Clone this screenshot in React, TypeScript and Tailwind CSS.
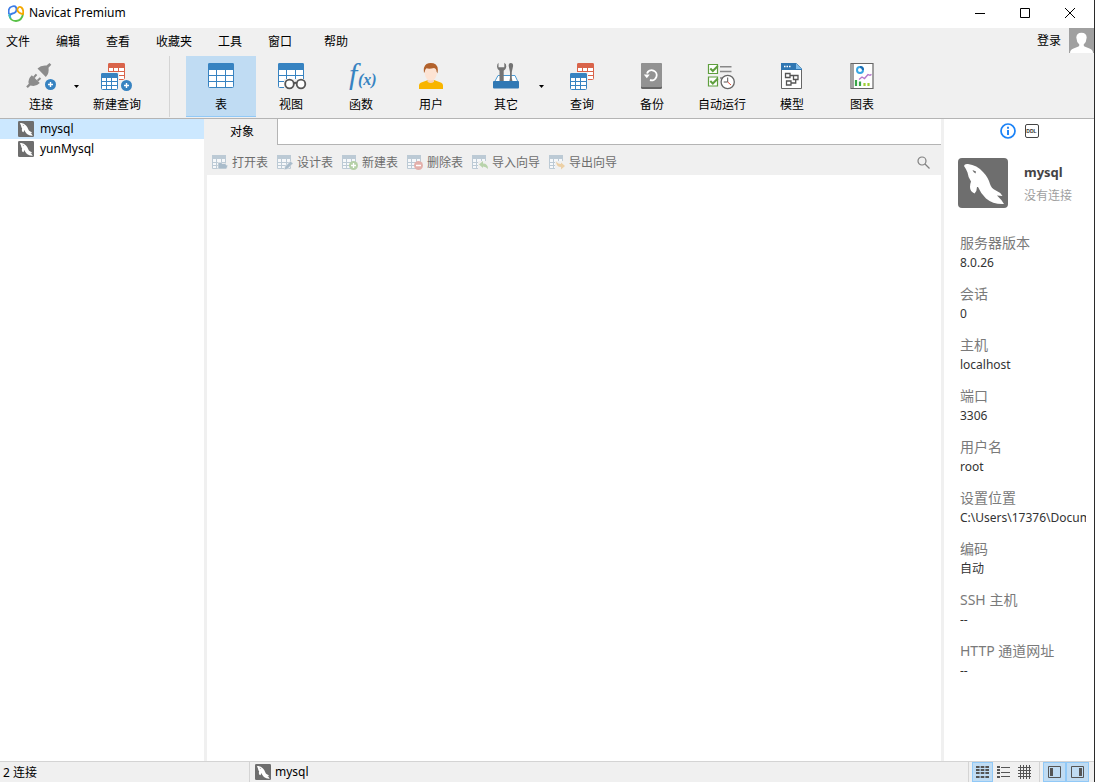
import type { ReactNode } from "react";
import clsx from "clsx";

const BLUE = "#3783c1";
const RED = "#d9634a";

function Grid({ x, y, w, h, head, color, cols, rows }: {
  x: number; y: number; w: number; h: number; head: number; color: string; cols: number[]; rows: number[];
}) {
  return (
    <g>
      <rect x={x + 0.5} y={y + 0.5} width={w - 1} height={h - 1} rx="1" fill="#fff" stroke={color} />
      <path d={`M${x} ${y + head}V${y + 1.5}q0-1.5 1.5-1.5h${w - 3}q1.5 0 1.5 1.5V${y + head}z`} fill={color} />
      {cols.map((c) => (
        <path key={c} d={`M${x + c + 0.5} ${y + head}V${y + h}`} stroke={color} />
      ))}
      {rows.map((r) => (
        <path key={r} d={`M${x} ${y + r + 0.5}H${x + w}`} stroke={color} />
      ))}
    </g>
  );
}

function Plus({ x, y }: { x: number; y: number }) {
  return (
    <g>
      <circle cx={x} cy={y} r="6.5" fill="#f0f0f0" />
      <circle cx={x} cy={y} r="5.5" fill={BLUE} />
      <path d={`M${x - 2.5} ${y}h5M${x} ${y - 2.5}v5`} stroke="#fff" strokeWidth="1.4" />
    </g>
  );
}

function Icon({ children }: { children: ReactNode }) {
  return (
    <svg viewBox="0 0 32 28" className="h-7 w-8 overflow-visible" fill="none" aria-hidden="true">
      {children}
    </svg>
  );
}

const queryTables = (
  <>
    <Grid x={7} y={1} w={17} h={17} head={5} color={RED} cols={[5, 10]} rows={[8, 12]} />
    <rect x="-1" y="10" width="19" height="19" fill="#f0f0f0" />
    <Grid x={0} y={11} w={17} h={17} head={5} color={BLUE} cols={[5, 10]} rows={[8, 12]} />
  </>
);

const connectIcon = (
  <Icon>
    <path d="M12.5 6.5Q16 3 21.5 3.6l3-2.6 1.8 1.8-2.8 3Q24.5 11.5 20.8 15z" fill="#8c8c8c" />
    <path d="M6.8 13.2 14.8 21Q11 25 5.5 23.5L2.800 26 1.200 24.400 3.800 21.800Q2.500 17 6.800 13.200z" fill="#8c8c8c" />
    <path d="m8.800 15.500 2.700-3.200M12.500 18.800l3-2.700" stroke="#8c8c8c" strokeWidth="2" />
    <Plus x={25.5} y={22.5} />
  </Icon>
);

const newQueryIcon = (
  <Icon>
    {queryTables}
    <Plus x={25.5} y={23.5} />
  </Icon>
);

const tableIcon = (
  <Icon>
    <Grid x={3} y={1} w={26} h={25} head={7} color={BLUE} cols={[8, 17]} rows={[12, 18]} />
  </Icon>
);

const viewIcon = (
  <Icon>
    <Grid x={3} y={1} w={26} h={25} head={7} color={BLUE} cols={[8, 17]} rows={[12, 18]} />
    <path d="M9 17h21v10H9z" fill="#f0f0f0" />
    <g stroke="#555" strokeWidth="1.8">
      <circle cx="14.5" cy="22" r="4.3" fill="#fff" />
      <circle cx="26" cy="22" r="4.3" fill="#fff" />
      <path d="M18.5 21.5q1.700-1.500 3.400 0" />
    </g>
  </Icon>
);

const functionIcon = (
  <Icon>
    <g fill={BLUE} className="font-['Liberation_Serif',serif] italic">
      <text x="4" y="22" fontSize="30">f</text>
      <text x="13" y="23" fontSize="16" fontWeight="bold">(x)</text>
    </g>
  </Icon>
);

const userIcon = (
  <Icon>
    <path d="M4 27v-3.500q0-2.500 3-3.300l6-2.200h6l6 2.200q3 .8 3 3.300V27z" fill="#f8b500" />
    <path d="M12.500 17.500h6.500v2.200q-3.200 2.600-6.500 0z" fill="#f9d3b6" />
    <ellipse cx="15.8" cy="11.5" rx="6" ry="7" fill="#fde3d3" />
    <path d="M9 11Q8 4.500 11.500 2q3-1.700 7-.7Q24 3 22.500 11.500l-1-2Q21.500 6.500 19 6q-5 1.200-7.500.2Q10 7.500 9.700 10z" fill="#b2622c" />
  </Icon>
);

const toolsIcon = (
  <Icon>
    <path d="M4.500 20 8 13.500h17L28 20z" fill="#fff" stroke="#4a9ad4" />
    <path d="M8.500.8v4.500h5.800V.8q2.200 1.200 2 4-.2 2.500-2.600 4V21h-4.200V8.800q-2.300-1.300-2.500-4 0-2.800 1.500-4z" fill="#737373" />
    <path d="M20.800 1q2.500 0 2.300 3l-1.300 6v6l.8 4h-3.400l.8-4v-6L18.700 4q-.2-3 2.100-3z" fill="#737373" />
    <rect x="3" y="19" width="26" height="7.5" rx="1" fill="#3078b4" />
  </Icon>
);

const queryIcon = (
  <Icon>
    <g transform="translate(4 0)">{queryTables}</g>
  </Icon>
);

const backupIcon = (
  <Icon>
    <rect x="5" y="1" width="21" height="26" rx="1.5" fill="#666" />
    <path d="M5 24V2.500Q5 1 6.500 1h18Q26 1 26 2.500V24q0 1-1 1H6q-1 0-1-1z" fill="#929292" />
    <path d="M11 11.500A5 5 0 1 1 14 18" stroke="#fff" strokeWidth="1.9" />
    <path d="M7.800 12.500h6l-3 3.800z" fill="#fff" />
  </Icon>
);

const autoIcon = (
  <Icon>
    <path d="M2.500 2.500h9v9h-9zM2.500 15h9v9h-9z" fill="#fff" stroke="#5f9f3e" strokeWidth="1.2" />
    <path d="m4.300 6.500 2.500 2.500 5-5M4.300 19l2.500 2.500 5-5" stroke="#5f9f3e" strokeWidth="2" />
    <path d="M14 4.700h11.500M14 9.500h11.500M14 16h3" stroke="#888" strokeWidth="1.5" />
    <circle cx="21.7" cy="20" r="6.6" fill="#fff" stroke="#666" strokeWidth="1.3" />
    <path d="M21.700 15.500V20h-4" stroke="#555" />
    <path d="m21.700 20 3.300 3" stroke="#e0503c" />
  </Icon>
);

const modelIcon = (
  <Icon>
    <path d="M5.500 1.500h15l5 5v20h-20z" fill="#fff" stroke="#666" />
    <path d="M5 1h15l6 6v1H5z" fill="#2f76b2" />
    <path d="M20 1v6h6z" fill="#7cbbea" />
    <path d="M8 4.500h6.500" stroke="#fff" strokeWidth="1.5" strokeDasharray="1.5 1" />
    <path
      d="M9.500 11.500h4.500v4H9.500zM17.500 13.500h4.500v4h-4.500zM10.500 19h4.500v4h-4.500zM14 13.500h3.500M15 21h4.700v-3.500"
      stroke="#555"
      strokeWidth="1.3"
    />
  </Icon>
);

const chartIcon = (
  <Icon>
    <path d="M5 1.500h22v25H5zM7 1.500v25" fill="#fff" stroke="#666" strokeWidth="1.2" />
    <circle cx="14" cy="8" r="3" stroke="#38a7e4" strokeWidth="2" />
    <path d="M14 5a3 3 0 0 1 3 3" stroke="#1d6db2" strokeWidth="2" />
    <path d="m13 17.500 3-2.500 2.500 1.500 3.500-4 2 .8 1.500-1" stroke="#b678cb" strokeWidth="1.4" />
    <path d="M10 24v-6M14 24v-4.500" stroke="#3aa649" strokeWidth="2.2" />
    <path d="M18.500 24v-3M22.500 24v-3" stroke="#9fcf35" strokeWidth="2.2" />
  </Icon>
);

function Dolphin({ className }: { className: string }) {
  return (
    <svg viewBox="0 0 50 50" className={className} aria-hidden="true">
      <rect width="50" height="50" rx="4" fill="#6e6e6e" />
      <path
        d="M6 8Q6.500 5.500 10 6q9 1 15 8 5 5 7 12 1.500 4.500 5 6 5 2 7.500 6L39 37.500q4.500 4 7 8.500-11 .5-18-5.500-5-4.500-8-11.500l-1 0q0 4-2.500 6.500-4.500-2-4.500-6.500 0-3 1-5.500-3-4.500-3.500-9Q8.500 11.500 6 8z"
        fill="#fff"
      />
      <path d="m14.500 12 3.500 1.500-.5 2q-2-.5-3-3.500z" fill="#6e6e6e" />
    </svg>
  );
}

function ToolButton({ label, icon, active, split }: {
  label: string; icon: ReactNode; active?: boolean; split?: boolean;
}) {
  const button = (
    <button
      className={clsx(
        "flex flex-col items-center border-b pt-1.5 pb-px",
        split ? "ml-[7px] w-[66px]" : "w-[70px]",
        active ? "border-[#91c9f7] bg-[#c0dcf3]" : "border-transparent",
      )}
    >
      {icon}
      <span className="mt-[5px] leading-5">{label}</span>
    </button>
  );
  if (!split) return button;
  return (
    <div className="flex">
      {button}
      <button aria-label={`${label}菜单`} className="flex w-2 items-center">
        <svg viewBox="0 0 5 3" className="h-[3px] w-[5px]" aria-hidden="true">
          <path d="M0 0h5L2.500 3z" />
        </svg>
      </button>
    </div>
  );
}

const badges: Record<string, ReactNode> = {
  open: <path d="M6 15V8.500h3l1 1h4V11h2l-1.500 4z" fill="#a9bccb" stroke="#f0f0f0" strokeWidth=".6" />,
  design: <path d="m7 16 1-3.500L13.500 7l2.500 2.500-5.500 5.500z" fill="#a9bccb" stroke="#f0f0f0" strokeWidth=".6" />,
  add: (
    <>
      <circle cx="11.5" cy="11.5" r="4.5" fill="#b5d0a6" />
      <path d="M9 11.500h5M11.500 9v5" stroke="#fff" strokeWidth="1.3" />
    </>
  ),
  remove: (
    <>
      <circle cx="11.5" cy="11.5" r="4.5" fill="#e3b0ab" />
      <path d="M9 11.500h5" stroke="#fff" strokeWidth="1.5" />
    </>
  ),
  import: (
    <>
      <path d="M6 7h10v9H6z" fill="#f0f0f0" />
      <path d="m7 10.500 4-3.500v2.500q5 0 5 5.500-2-2.500-5-2.500V14z" fill="#b8d3ab" />
    </>
  ),
  export: (
    <>
      <path d="M6 7h10v9H6z" fill="#f0f0f0" />
      <path d="m16 12-4 3.500V13q-4.500 0-5-5.500 2 2.500 5 2.500V8.500z" fill="#ecd0a6" />
    </>
  ),
};

const actions = [
  { label: "打开表", badge: "open" },
  { label: "设计表", badge: "design" },
  { label: "新建表", badge: "add" },
  { label: "删除表", badge: "remove" },
  { label: "导入向导", badge: "import" },
  { label: "导出向导", badge: "export" },
];

const connections = ["mysql", "yunMysql"];

const details = [
  ["服务器版本", "8.0.26"],
  ["会话", "0"],
  ["主机", "localhost"],
  ["端口", "3306"],
  ["用户名", "root"],
  ["设置位置", "C:\\Users\\17376\\Docum"],
  ["编码", "自动"],
  ["SSH 主机", "--"],
  ["HTTP 通道网址", "--"],
];

function TitleBar() {
  return (
    <header className="flex h-7 items-center bg-white pr-px pb-0.5 pl-2">
      <svg viewBox="0 0 16 17" className="h-[17px] w-4" fill="none" strokeWidth="1.8" aria-hidden="true">
        <path d="M1.300 10Q2 16 8 16q6-.5 7-7" stroke="#58c146" />
        <path d="M1 9Q-.5 3 4 1.500 8 0 8.500 4q0 4-4 4.500Q2 9 1.500 11" stroke="#3d7de8" />
        <path d="M9.500 4Q11 .8 13.500 2.500q2.500 2.500 1.500 6.500-2 0-4-1.500Q9 6 9.500 4" stroke="#f5a800" />
        <path d="M1.200 9q.2 2.500 1.500 4" stroke="#35b4cf" />
      </svg>
      <h1 className="ml-[5px] flex-1">Navicat Premium</h1>
      <div className="flex">
        <button aria-label="最小化" className="flex h-6 w-[46px] items-center justify-center">
          <svg className="h-2.5 w-2.5" viewBox="0 0 10 10" stroke="#000"><path d="M0 5.500h10" /></svg>
        </button>
        <button aria-label="最大化" className="flex h-6 w-11 items-center justify-center">
          <svg className="h-2.5 w-2.5" viewBox="0 0 10 10" fill="none" stroke="#000"><path d="M.5.5h9v9h-9z" /></svg>
        </button>
        <button aria-label="关闭" className="flex h-6 w-[46px] items-center justify-center">
          <svg className="h-2.5 w-2.5" viewBox="0 0 10 10" stroke="#000"><path d="m0 0 10 10M10 0 0 10" /></svg>
        </button>
      </div>
    </header>
  );
}

function MenuBar() {
  return (
    <div className="flex h-[26px] items-start pl-1.5">
      <nav className="flex gap-[26px] leading-7">
        {["文件", "编辑", "查看", "收藏夹", "工具", "窗口"].map((m) => (
          <button key={m}>{m}</button>
        ))}
      </nav>
      <button className="ml-8 leading-7">帮助</button>
      <button className="ml-auto flex items-center gap-2">
        登录
        <svg viewBox="0 0 25 25" className="size-[25px]" aria-hidden="true">
          <path d="M0 0h25v25H0z" fill="#a0a0a0" />
          <path d="M1 25q0-3.500 3.500-4.500l5-2q1-.5.8-2Q7.500 14 7.300 9.500 7.500 4.800 12.500 4.800t5.200 4.700q-.2 4.500-3 7-.2 1.500.8 2l5 2Q24 21.500 24 25z" fill="#fff" />
        </svg>
      </button>
    </div>
  );
}

function Toolbar() {
  return (
    <div className="flex border-b border-[#b4b4b4] pt-0.5 pb-px pl-px">
      <ToolButton label="连接" icon={connectIcon} split />
      <ToolButton label="新建查询" icon={newQueryIcon} />
      <div className="mr-4 ml-[17px] w-px bg-[#d4d4d4]" />
      <ToolButton label="表" icon={tableIcon} active />
      <ToolButton label="视图" icon={viewIcon} />
      <ToolButton label="函数" icon={functionIcon} />
      <ToolButton label="用户" icon={userIcon} />
      <ToolButton label="其它" icon={toolsIcon} split />
      <ToolButton label="查询" icon={queryIcon} />
      <ToolButton label="备份" icon={backupIcon} />
      <ToolButton label="自动运行" icon={autoIcon} />
      <ToolButton label="模型" icon={modelIcon} />
      <ToolButton label="图表" icon={chartIcon} />
    </div>
  );
}

function ObjectPane() {
  return (
    <main className="flex min-w-0 flex-1 flex-col border-x-[3px] border-[#f0f0f0] bg-white">
      <div className="flex h-[26px]">
        <button className="w-[70px] bg-[#f0f0f0]">对象</button>
        <div className="flex-1 border-b border-l border-[#b4b4b4]" />
      </div>
      <div className="flex h-[30px] items-center gap-[9px] bg-[#f0f0f0] pt-1 pr-[11px] pl-[5px] text-[#6d6d6d]">
        {actions.map(({ label, badge }) => (
          <button key={label} className="flex items-center gap-1">
            <svg viewBox="0 0 16 16" className="size-4" fill="none" aria-hidden="true">
              <path d="M.5 1.500h13v13H.5z" fill="#f6f8fa" stroke="#bccad5" />
              <path d="M0 1h14v4H0z" fill="#bccad5" />
              <path d="M4.500 5v10M9.500 5v10M0 8.500h14M0 11.500h14" stroke="#bccad5" />
              {badges[badge]}
            </svg>
            <span className="pt-0.5">{label}</span>
          </button>
        ))}
        <button aria-label="搜索" className="ml-auto">
          <svg viewBox="0 0 13 13" className="size-[13px]" fill="none" stroke="#808080" strokeWidth="1.2" aria-hidden="true">
            <circle cx="5" cy="5" r="4" />
            <path d="m8 8 4.500 4.500" />
          </svg>
        </button>
      </div>
    </main>
  );
}

function InfoPane() {
  return (
    <aside className="w-[150px] shrink-0 bg-white">
      <div className="flex h-6 items-center justify-center gap-[9px]">
        <button aria-label="常规">
          <svg viewBox="0 0 16 16" className="size-4" fill="none" stroke="#1a82f7" aria-hidden="true">
            <circle cx="8" cy="8" r="7" strokeWidth="1.7" />
            <path d="M8 7v5M8 3.800v1.900" strokeWidth="1.9" />
          </svg>
        </button>
        <button>
          <span className="flex h-3.5 w-3.5 items-center justify-center rounded-xs border border-[#444] font-['Liberation_Sans',sans-serif] text-[5px] font-bold text-[#333]">
            DDL
          </span>
        </button>
      </div>
      <div className="mt-[15px] flex items-center gap-4 pl-3.5">
        <Dolphin className="size-[50px]" />
        <div className="pt-0.5">
          <h2 className="text-[13px] leading-6 font-bold text-[#444]">mysql</h2>
          <p className="leading-6 text-[#a0a0a0]">没有连接</p>
        </div>
      </div>
      <dl className="mt-[25px] flex flex-col gap-[11px] pr-2 pl-4">
        {details.map(([name, value]) => (
          <div key={name}>
            <dt className="text-sm leading-5 text-[#7a7a7a]">{name}</dt>
            <dd className="overflow-hidden leading-5 whitespace-nowrap text-[#333]">{value}</dd>
          </div>
        ))}
      </dl>
    </aside>
  );
}

function StatusButton({ label, active, className, children }: {
  label: string; active?: boolean; className: string; children: ReactNode;
}) {
  return (
    <button
      aria-label={label}
      className={clsx(
        "flex h-5 items-center justify-center border",
        className,
        active ? "border-[#91c9f7] bg-[#c0dcf3]" : "border-transparent",
      )}
    >
      <svg viewBox="0 0 13 14" className="h-3.5 w-[13px] shrink-0" fill="none" stroke="#555" aria-hidden="true">
        {children}
      </svg>
    </button>
  );
}

function StatusBar() {
  return (
    <footer className="flex h-[21px] items-stretch border-t border-[#d4d4d4]">
      <span className="w-[249px] pl-[3px] leading-[22px]">2 连接</span>
      <div className="flex flex-1 items-center gap-1 border-l border-[#d4d4d4] pl-[5px]">
        <Dolphin className="size-4" />
        <span className="leading-[22px]">mysql</span>
      </div>
      <div className="flex border-l border-[#d4d4d4] pl-[3px]">
        <StatusButton label="列表" className="w-[21px]" active>
          <path d="M0 2h13M0 5h13M0 8h13M0 12h13" strokeWidth="2" strokeDasharray="3.6 1.1" />
        </StatusButton>
        <StatusButton label="详细信息" className="w-[21px]">
          <path d="M0 2h3M0 5h3M0 8h3M0 12h3" strokeWidth="2" />
          <path d="M4 2.500h9M4 7.500h9M4 11.500h9" />
        </StatusButton>
        <StatusButton label="ER 图表" className="w-[21px]">
          <path d="M2.500 0v14M5.500 0v14M8.500 0v14M11.500 0v14M0 2.500h13M0 5.500h13M0 8.500h13M0 11.500h13" />
        </StatusButton>
      </div>
      <div className="ml-1 flex border-l border-[#d4d4d4] pr-[5px] pl-[3px]">
        <StatusButton label="导航窗格" className="w-[23px]" active>
          <path d="M.5 1.500h12v11H.5z" />
          <path d="M3.500 3v8" strokeWidth="3" />
        </StatusButton>
        <StatusButton label="信息窗格" className="w-[23px]" active>
          <path d="M.5 1.500h12v11H.5z" />
          <path d="M9.500 3v8" strokeWidth="3" />
        </StatusButton>
      </div>
    </footer>
  );
}

export default function App() {
  return (
    <div className="flex min-h-screen flex-col border-r border-[#2b2b2b] bg-[#f0f0f0] font-['Noto_Sans','Noto_Sans_CJK_SC',sans-serif] text-xs text-black">
      <TitleBar />
      <MenuBar />
      <Toolbar />
      <div className="flex flex-1">
        <ul className="w-[204px] shrink-0 bg-white">
          {connections.map((name, i) => (
            <li key={name}>
              <button
                className={clsx("flex h-5 w-full items-center gap-1.5 pl-[18px]", i === 0 && "bg-[#cce8ff]")}
              >
                <Dolphin className="size-4" />
                {name}
              </button>
            </li>
          ))}
        </ul>
        <ObjectPane />
        <InfoPane />
      </div>
      <StatusBar />
    </div>
  );
}
